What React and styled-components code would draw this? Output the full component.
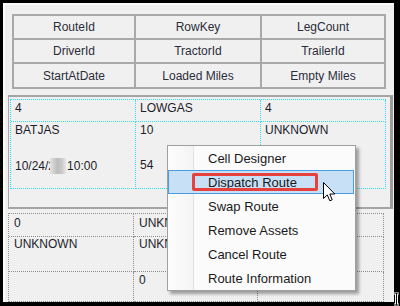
import React from "react";
import styled, { createGlobalStyle } from "styled-components";

const GlobalStyle = createGlobalStyle`
  html, body {
    margin: 0;
    padding: 0;
    background: #000;
  }
  body {
    font-family: "Liberation Sans", Arial, sans-serif;
    font-size: 12px;
  }
`;

const Frame = styled.div`
  position: relative;
  width: 400px;
  height: 306px;
  box-sizing: border-box;
  padding: 3px 6px 4px 3px;
  background: #000;
`;

const Inner = styled.div`
  height: 100%;
  box-sizing: border-box;
  background: #f0f0f0;
  border-left: 2px solid #fbfbfb;
  border-top: 2px solid #fbfbfb;
  overflow: hidden;
  display: flex;
  flex-direction: column;
`;

const HeaderGrid = styled.div`
  margin: 9px 0 0 7px;
  width: 374px;
  box-sizing: border-box;
  display: grid;
  grid-template-columns: 120px 124px 122px;
  grid-template-rows: 22px 22px 23px;
  gap: 2px;
  border: 2px solid #a9a9a9;
  background: #a9a9a9;
`;

const HeaderCell = styled.div`
  background: #f0f0f0;
  color: #2c2d3a;
  display: flex;
  align-items: center;
  justify-content: center;
`;

const Panel = styled.div`
  margin: 6px 1px 0 3px;
  height: 124px;
  box-sizing: border-box;
  border-top: 2px solid #a4a4a4;
  border-left: 1px solid #a8a8a8;
  border-right: 3px solid #9c9c9c;
  border-bottom: 2px solid #a4a4a4;
`;

const DataGrid = styled.div`
  margin: 2px 0 0 1px;
  display: grid;
  grid-template-columns: ${(p) => p.$cols};
  grid-template-rows: ${(p) => p.$rows};
  border-top: 1px dotted ${(p) => p.$line};
  border-left: 1px dotted ${(p) => p.$line};
  width: max-content;
`;

const BottomGrid = styled(DataGrid)`
  margin: 4px 0 0 3px;
`;

const DataCell = styled.div`
  box-sizing: border-box;
  border-right: 1px dotted ${(p) => p.$line};
  border-bottom: 1px dotted ${(p) => p.$line};
  padding: ${(p) => p.$pad || "1px 0 0 4px"};
  color: #1d1d2b;
  line-height: 15px;
  display: flex;
  flex-direction: column;
  gap: ${(p) => p.$gap || "0px"};
  overflow: hidden;
  white-space: nowrap;
`;

const Line = styled.span`
  display: flex;
  align-items: center;
`;

const Blur = styled.span`
  display: inline-block;
  width: 16px;
  height: 16px;
  margin: 0 1px 0 -5px;
  background: linear-gradient(90deg, #e4e4e4, #bdbdbd 45%, #c6c6c6 70%, #e6e6e6);
  filter: blur(0.6px);
`;

const Menu = styled.div`
  position: absolute;
  left: 167px;
  top: 145px;
  width: 189px;
  height: 146px;
  box-sizing: border-box;
  border: 1px solid #a0a0a0;
  background: linear-gradient(90deg, #fdfdfd 0, #f4f4f4 25px, #e3e3e3 25px, #e3e3e3 26px, #fbfbfb 26px);
  box-shadow: 3px 3px 3px rgba(0, 0, 0, 0.35);
  padding: 0 1px 0 0;
  display: flex;
  flex-direction: column;
`;

const MenuItem = styled.div`
  position: relative;
  height: 24px;
  box-sizing: border-box;
  display: flex;
  align-items: center;
  padding-left: 39px;
  color: #1a1a1a;
  font-size: 13px;
  border: 1px solid ${(p) => (p.$active ? "#4a9be6" : "transparent")};
  background: ${(p) => (p.$active ? "#c7e0f6" : "transparent")};
`;

const Mark = styled.div`
  position: absolute;
  left: 23px;
  top: 2px;
  width: 126px;
  height: 18px;
  box-sizing: border-box;
  border: 3px solid #e8403c;
  border-radius: 2px;
`;

const Pointer = styled.svg`
  position: absolute;
  left: 323px;
  top: 182px;
`;

const IBeam = styled.svg`
  position: absolute;
  left: 393px;
  top: 292px;
`;

const headers = [
  "RouteId",
  "RowKey",
  "LegCount",
  "DriverId",
  "TractorId",
  "TrailerId",
  "StartAtDate",
  "Loaded Miles",
  "Empty Miles",
];

const menuItems = [
  "Cell Designer",
  "Dispatch Route",
  "Swap Route",
  "Remove Assets",
  "Cancel Route",
  "Route Information",
];

const CYAN = "#27e3ee";
const GREY = "#8e8e8e";

const App = () => {
  return (
    <>
      <GlobalStyle />
      <Frame>
        <Inner>
          <HeaderGrid>
            {headers.map((h) => (
              <HeaderCell key={h}>{h}</HeaderCell>
            ))}
          </HeaderGrid>

          <Panel>
            <DataGrid $cols="125px 125px 125px" $rows="22px 67px" $line={CYAN}>
              <DataCell $line={CYAN}>4</DataCell>
              <DataCell $line={CYAN}>LOWGAS</DataCell>
              <DataCell $line={CYAN}>4</DataCell>
              <DataCell $line={CYAN} $gap="20px">
                <Line>BATJAS</Line>
                <Line>
                  10/24/2
                  <Blur />
                  10:00
                </Line>
              </DataCell>
              <DataCell $line={CYAN} $gap="20px">
                <Line>10</Line>
                <Line>54</Line>
              </DataCell>
              <DataCell $line={CYAN} $gap="20px">
                <Line>UNKNOWN</Line>
              </DataCell>
            </DataGrid>
          </Panel>

          <BottomGrid $cols="125px 124px 126px" $rows="23px 35px 30px" $line={GREY}>
            <DataCell $line={GREY} $pad="2px 0 0 5px">0</DataCell>
            <DataCell $line={GREY} $pad="2px 0 0 5px">UNKNOWN</DataCell>
            <DataCell $line={GREY} $pad="2px 0 0 5px" />
            <DataCell $line={GREY} $pad="0 0 0 5px">UNKNOWN</DataCell>
            <DataCell $line={GREY} $pad="0 0 0 5px">UNKNOWN</DataCell>
            <DataCell $line={GREY} $pad="0 0 0 5px" />
            <DataCell $line={GREY} $pad="1px 0 0 5px" />
            <DataCell $line={GREY} $pad="1px 0 0 5px">0</DataCell>
            <DataCell $line={GREY} $pad="1px 0 0 5px" />
          </BottomGrid>
        </Inner>

        <Menu>
          {menuItems.map((m, i) => (
            <MenuItem key={m} $active={i === 1}>
              {i === 1 && <Mark />}
              {m}
            </MenuItem>
          ))}
        </Menu>

        <Pointer width="13" height="21" viewBox="0 0 13 21">
          <path
            d="M0.5 0.5 L0.5 16.5 L4.3 12.9 L6.8 18.8 L9.2 17.8 L6.8 12 L11.8 12 Z"
            fill="#fff"
            stroke="#000"
            strokeWidth="1"
          />
        </Pointer>

        <IBeam width="7" height="14" viewBox="0 0 7 14">
          <path d="M1 1 H6 M3.5 1 V13 M1 13 H6" stroke="#fff" strokeWidth="3" fill="none" />
          <path d="M1 1 H6 M3.5 1 V13 M1 13 H6" stroke="#000" strokeWidth="1" fill="none" />
        </IBeam>
      </Frame>
    </>
  );
};

export default App;
